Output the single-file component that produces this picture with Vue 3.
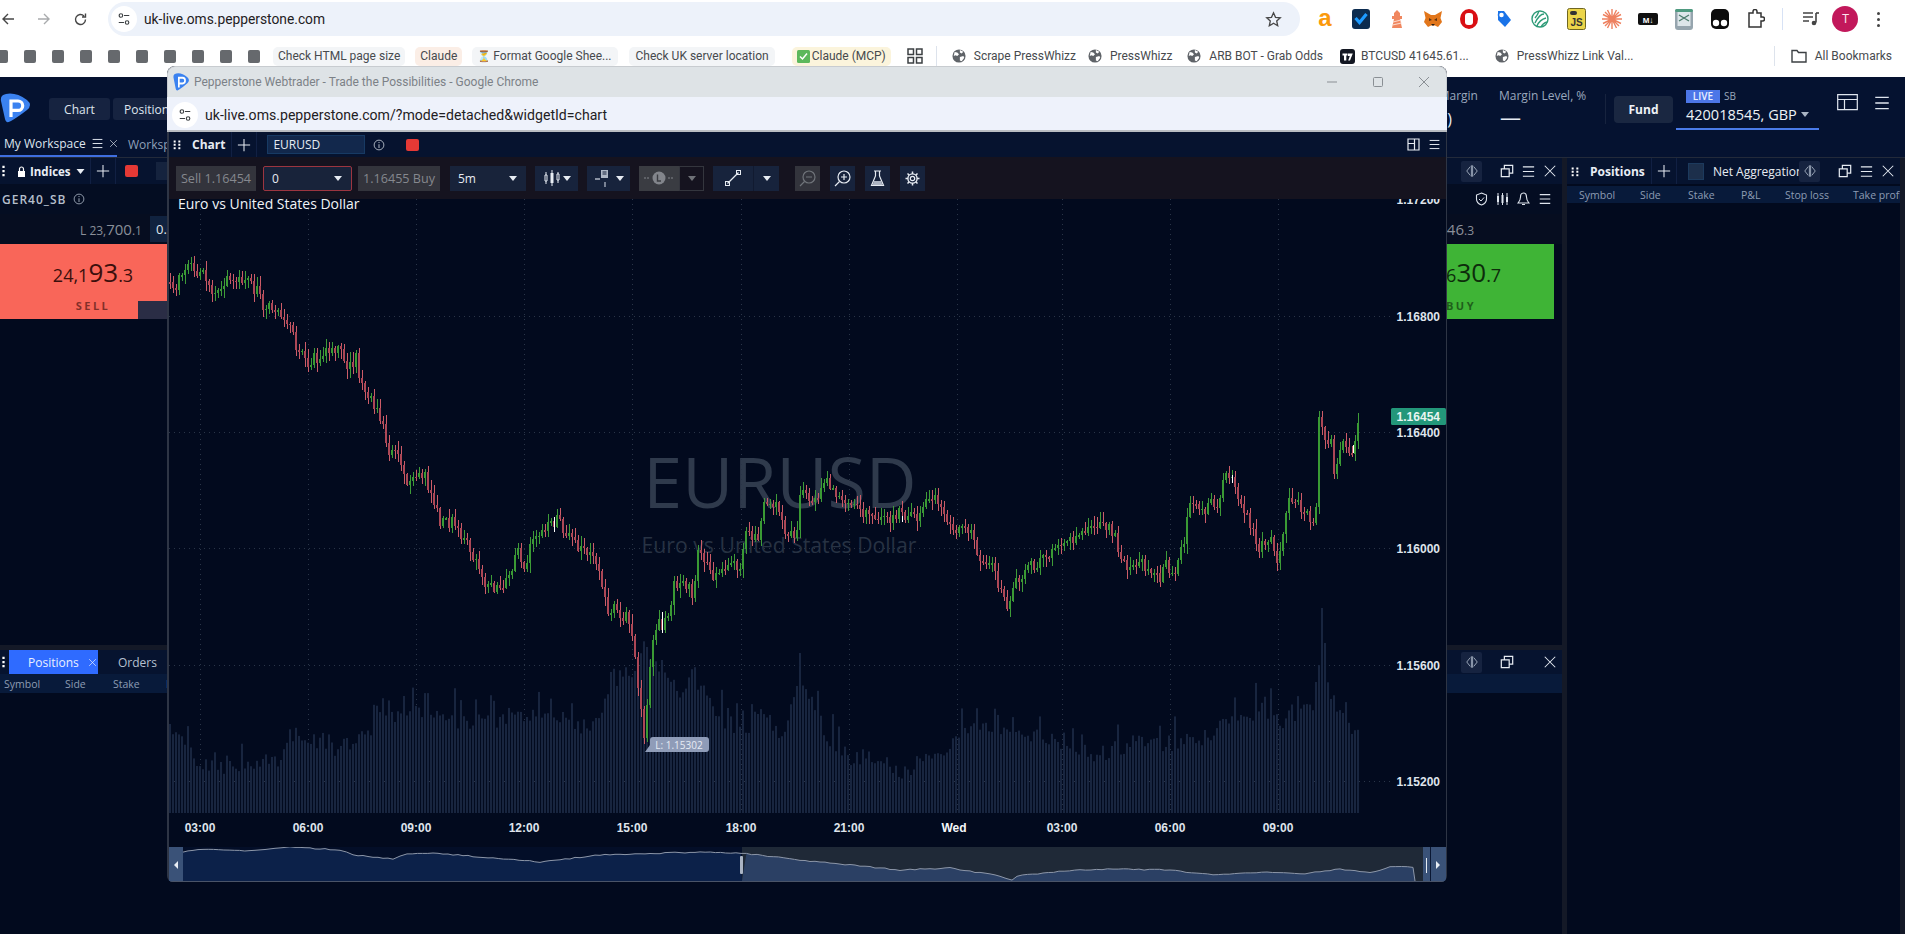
<script setup>
function rng(seed) {
  let s = seed
  return () => {
    s = (s * 1664525 + 1013904223) % 4294967296
    return s / 4294967296
  }
}
function interp(pts, x) {
  if (x <= pts[0][0]) return pts[0][1]
  for (let i = 1; i < pts.length; i++) {
    if (x <= pts[i][0]) {
      const [a, b] = pts[i - 1]
      const [c, d] = pts[i]
      return b + ((d - b) * (x - a)) / (c - a)
    }
  }
  return pts[pts.length - 1][1]
}

const pricePts = [[169,282],[175,293],[180,270],[187,267],[200,272],[213,293],[223,280],[237,283],[248,282],[260,297],[263,310],[273,308],[288,320],[293,343],[307,362],[323,353],[338,348],[347,370],[355,357],[360,383],[370,400],[383,427],[387,450],[400,462],[408,488],[422,470],[427,487],[440,523],[453,523],[460,540],[470,550],[480,578],[490,585],[500,590],[510,567],[517,547],[523,570],[533,537],[557,517],[570,543],[590,553],[597,573],[607,610],[617,610],[628,620],[633,653],[643,740],[650,653],[657,620],[663,627],[673,587],[687,583],[692,600],[697,547],[713,577],[733,567],[740,577],[743,537],[757,533],[763,497],[777,507],[783,527],[795,543],[798,497],[802,485],[810,510],[823,483],[833,487],[840,507],[853,502],[860,510],[877,517],[885,520],[897,513],[907,518],[920,517],[925,493],[940,507],[953,527],[965,523],[973,543],[980,563],[993,570],[1000,590],[1005,612],[1012,585],[1025,570],[1045,556],[1065,545],[1085,530],[1100,523],[1110,527],[1120,553],[1128,570],[1140,557],[1147,570],[1158,580],[1163,560],[1172,575],[1183,540],[1188,507],[1200,507],[1205,513],[1210,497],[1217,507],[1223,478],[1233,480],[1240,503],[1247,520],[1257,550],[1270,540],[1277,563],[1283,530],[1287,503],[1303,507],[1312,523],[1317,500],[1318,420],[1322,437],[1330,440],[1333,470],[1340,447],[1353,448],[1357,417]]

const volPts = [[169,726],[185,742],[200,762],[230,764],[280,754],[295,728],[310,736],[330,746],[370,730],[380,712],[420,708],[460,718],[500,716],[515,706],[540,716],[560,714],[590,726],[610,690],[640,656],[660,662],[680,690],[700,680],[720,716],[745,726],[760,704],[780,734],[800,672],[810,698],[830,738],[850,754],[877,752],[900,774],[920,756],[940,748],[953,736],[973,722],[1000,730],[1030,730],[1060,746],[1100,756],[1130,738],[1180,740],[1200,736],[1240,708],[1280,718],[1312,700],[1316,680],[1320,660],[1326,680],[1335,702],[1350,728],[1358,722]]

const r = rng(20240611)
let gw = '', gb = '', rw = '', rb = ''
let prev = interp(pricePts, 169)
for (let x = 169; x <= 1357; x += 3) {
  const close = interp(pricePts, x) + (r() - 0.5) * 13
  const top = Math.min(prev, close)
  const bot = Math.max(prev, close)
  const hi = top - 1 - r() * 9
  const lo = bot + 1 + r() * 9
  const up = close < prev
  const w = `M${x + 1} ${hi.toFixed(1)}V${lo.toFixed(1)}`
  const b = `M${x} ${top.toFixed(1)}h2V${Math.max(bot, top + 1.5).toFixed(1)}h-2z`
  if (up) { gw += w; gb += b } else { rw += w; rb += b }
  prev = close
}
const candlePaths = { gw, gb, rw, rb }
const whiteMarks = 'M554 517V532M662 612V633M902 516V522M1232 475V483M1353 445V453'

const vr = rng(77123)
const volSpikes = { 1318: 665, 1321: 608, 1324: 643, 799: 653, 646: 647, 610: 672 }
const volBars = []
for (let x = 169; x <= 1358; x += 3) {
  let y = interp(volPts, x) + vr() * 16 - 4
  if (vr() > 0.88) y -= 12 + vr() * 16
  if (volSpikes[x]) y = volSpikes[x]
  volBars.push({ x, y: +y.toFixed(1), h: +(813 - y).toFixed(1) })
}

const gridX = [200, 308, 416, 524, 632, 741, 849, 957, 1062, 1170, 1278]
const gridY = [316, 432, 548, 665, 781]
const prices = [
  { y: 203.5, t: '1.17200' }, { y: 320.5, t: '1.16800' }, { y: 436.5, t: '1.16400' },
  { y: 552.5, t: '1.16000' }, { y: 669.5, t: '1.15600' }, { y: 785.5, t: '1.15200' }
]
const times = [
  { x: 200, t: '03:00' }, { x: 308, t: '06:00' }, { x: 416, t: '09:00' }, { x: 524, t: '12:00' },
  { x: 632, t: '15:00' }, { x: 741, t: '18:00' }, { x: 849, t: '21:00' }, { x: 954, t: 'Wed', b: true },
  { x: 1062, t: '03:00' }, { x: 1170, t: '06:00' }, { x: 1278, t: '09:00' }
]

const navPts = [[183,852],[203,849],[250,851],[290,847],[340,850],[353,855],[393,859],[407,854],[433,853],[493,858],[540,862],[600,855],[700,852],[741,853],[800,860],[850,865],[900,870],[950,868],[1000,876],[1012,880],[1017,876],[1043,873],[1080,870],[1113,869],[1170,870],[1213,875],[1267,872],[1300,874],[1340,869],[1370,873],[1390,867],[1413,867],[1415,881]]
const nr = rng(991)
const navDense = []
for (let i = 0; i < navPts.length - 1; i++) {
  const [a, b] = navPts[i]
  const [c, d] = navPts[i + 1]
  const n = Math.max(1, Math.floor((c - a) / 5))
  for (let k = 0; k < n; k++) {
    const t = k / n
    navDense.push([+(a + (c - a) * t).toFixed(1), +(b + (d - b) * t + (nr() - 0.5) * 1.1).toFixed(1)])
  }
}
navDense.push([1415, 881])
const navLine = navDense.map(p => p.join(',')).join(' ')
const navLeft = navDense.filter(p => p[0] <= 742)
const navRight = navDense.filter(p => p[0] >= 742)
const navLeftArea = `183,881 ${navLeft.map(p => p.join(',')).join(' ')} 742,881`
const navRightArea = `742,881 ${navRight.map(p => p.join(',')).join(' ')}`

const leftMarks = Array.from({ length: 10 }, (_, i) => i)
const pills = [
  { t: 'Check HTML page size', c: 'p-plain' },
  { t: 'Claude', c: 'p-peach' },
  { t: 'Format Google Shee...', c: 'p-plain p-hour', hour: true },
  { t: 'Check UK server location', c: 'p-plain p-uk' },
  { t: 'Claude (MCP)', c: 'p-yellow p-mcp', check: true }
]
const columns = ['Symbol', 'Side', 'Stake', 'P&L', 'Stop loss', 'Take profit']
</script>

<template>
  <div class="page">
    <svg class="sprite" aria-hidden="true">
      <symbol id="i-ham" viewBox="0 0 16 16"><path d="M2 3h12M2 8h12M2 13h12" fill="none" stroke="currentColor" stroke-width="1.2"/></symbol>
      <symbol id="i-x" viewBox="0 0 16 16"><path d="M2 2l12 12M14 2L2 14" fill="none" stroke="currentColor" stroke-width="1.2"/></symbol>
      <symbol id="i-plus" viewBox="0 0 16 16"><path d="M8 1v14M1 8h14" fill="none" stroke="currentColor" stroke-width="1.2"/></symbol>
      <symbol id="i-restore" viewBox="0 0 16 16"><path d="M1.5 5.5h9v9h-9zM5 5.5V1.5h9.5v9h-4" fill="none" stroke="currentColor" stroke-width="1.4"/></symbol>
      <symbol id="i-split" viewBox="0 0 16 16"><path d="M6 3L2 8l4 5M10 3l4 5-4 5M7.3 1.5v13M8.7 1.5v13" fill="none" stroke="currentColor" stroke-width="1"/></symbol>
      <symbol id="i-info" viewBox="0 0 16 16"><circle cx="8" cy="8" r="6.5" fill="none" stroke="currentColor" stroke-width="1.1"/><path d="M8 7v5M8 4v1.4" stroke="currentColor" stroke-width="1.2"/></symbol>
      <symbol id="i-dots" viewBox="0 0 12 16"><path d="M1 2h3v3H1zM8 2h3v3H8zM1 7h3v3H1zM8 7h3v3H8zM1 12h3v3H1zM8 12h3v3H8z" fill="currentColor"/></symbol>
      <symbol id="i-tune" viewBox="0 0 16 16"><g fill="none" stroke="currentColor" stroke-width="1.3"><circle cx="4.5" cy="4" r="2"/><path d="M8 4h6M2 12h6"/><circle cx="11.5" cy="12" r="2"/></g></symbol>
      <symbol id="i-globe" viewBox="0 0 16 16"><circle cx="8" cy="8" r="7.5" fill="#5f6368"/><path d="M3 3.5l3 .5 2 2-2 2-2-1-2 1zM9 9l4-1 1 2-3 4-2-1zM9 1l4 2-2 2-2-1z" fill="#fff"/></symbol>
      <symbol id="i-logo" viewBox="0 0 32 30"><path d="M6 1Q16-1 27 7Q33 12 27 17Q18 24 11 28Q6 31 5 26L1 8Q0 2 6 1Z" fill="#3b82f0"/><path d="M11 24V8h7a4.6 4.6 0 0 1 0 9.4h-7" fill="none" stroke="#fff" stroke-width="3.2"/></symbol>
      <symbol id="i-caret" viewBox="0 0 8 5"><path d="M0 0h8L4 5z" fill="currentColor"/></symbol>
    </svg>

    <header class="browser">
      <div class="toolbar">
        <span class="nav-btn"><svg width="14" height="14" viewBox="0 0 14 14"><path d="M13 7H2M7 2L2 7l5 5" fill="none" stroke="#474747" stroke-width="1.4"/></svg></span>
        <span class="nav-btn"><svg width="14" height="14" viewBox="0 0 14 14"><path d="M1 7h11M7 2l5 5-5 5" fill="none" stroke="#a9abad" stroke-width="1.4"/></svg></span>
        <span class="nav-btn"><svg width="15" height="15" viewBox="0 0 15 15"><path d="M12.5 7.5a5 5 0 1 1-1.5-3.6M12.5 1.5V5H9" fill="none" stroke="#474747" stroke-width="1.4"/></svg></span>
        <div class="omnibox">
          <span class="tune"><svg width="14" height="14" class="ink"><use href="#i-tune"/></svg></span>
          <span class="url">uk-live.oms.pepperstone.com</span>
          <svg class="star" width="17" height="17" viewBox="0 0 17 17"><path d="M8.5 1.8l2 4.500 4.800.5-3.600 3.200 1 4.800-4.200-2.500-4.200 2.500 1-4.800L1.700 6.800l4.800-.5z" fill="none" stroke="#474747" stroke-width="1.3"/></svg>
        </div>
        <div class="exts">
          <span class="ext"><svg width="20" height="22" viewBox="0 0 20 22"><text x="10" y="18" text-anchor="middle" class="ext-a">a</text></svg></span>
          <span class="ext"><svg width="18" height="20" viewBox="0 0 18 20"><rect width="18" height="20" rx="3" fill="#0c2c50"/><path d="M3.5 9l4 4.500L14.500 5" fill="none" stroke="#1e9bff" stroke-width="3.2"/></svg></span>
          <span class="ext"><svg width="16" height="20" viewBox="0 0 16 20"><path d="M8 1l3 3v3h2v3h-2l2 9H3l2-9H3V7h2V4z" fill="#f0875f"/><path d="M4 13l8-2M3.5 16l9-2" stroke="#fbd9cc" stroke-width="1.2"/></svg></span>
          <span class="ext"><svg width="20" height="18" viewBox="0 0 20 18"><path d="M1 1l7 4h4l7-4-1.500 7L19 12l-4 5-3-1.500H8L5 17l-4-5 1.500-4z" fill="#e2761b"/><path d="M6 8l3 2-3 1zM14 8l-3 2 3 1z" fill="#5b3416"/><path d="M8 14h4l-2 2z" fill="#2b2018"/></svg></span>
          <span class="ext"><svg width="18" height="20" viewBox="0 0 18 20"><ellipse cx="9" cy="10" rx="9" ry="10" fill="#d90f14"/><rect x="5" y="4" width="8" height="12" rx="3" fill="#fff"/></svg></span>
          <span class="ext"><svg width="18" height="20" viewBox="0 0 18 20"><path d="M3 2h6l7 9-6 7-7-7z" fill="#1a73e8"/><circle cx="6.5" cy="6" r="3" fill="#fff" stroke="#1a73e8" stroke-width="1.5"/></svg></span>
          <span class="ext"><svg width="18" height="20" viewBox="0 0 18 20"><g fill="none" stroke="#2e9b78" stroke-width="1.4"><circle cx="9" cy="10" r="8"/><path d="M4 14c3-6 6-9 9-9M6 17c2-5 5-7 9-8M4 9c2-2 3-4 4-7M10 18c1-2 2-4 6-5"/></g></svg></span>
          <span class="ext"><svg width="19" height="22" viewBox="0 0 19 22"><rect x=".5" y=".5" width="18" height="21" rx="2" fill="#ecd54a" stroke="#6f6622"/><rect x="3" y="3" width="7" height="4" rx="2" fill="#333"/><text x="9.5" y="18" text-anchor="middle" class="ext-js">JS</text></svg></span>
          <span class="ext"><svg width="20" height="20" viewBox="0 0 20 20"><g stroke="#ee8160" stroke-width="1.4"><path d="M10 0v20M0 10h20M3 3l14 14M17 3L3 17M5.5 1l9 18M14.5 1l-9 18M1 5.5l18 9M19 5.5l-18 9"/></g></svg></span>
          <span class="ext"><svg width="20" height="12" viewBox="0 0 20 12"><rect width="20" height="12" rx="2" fill="#111"/><text x="10" y="9.5" text-anchor="middle" class="ext-md">M↓</text></svg></span>
          <span class="ext"><svg width="18" height="21" viewBox="0 0 18 21"><rect width="18" height="21" rx="3" fill="#96a5ae"/><rect x="2.5" y="3" width="13" height="14" fill="#dde6ea"/><path d="M4 6l10 6M14 6L4 12" stroke="#4c7c6d" stroke-width="1.4"/><rect y="0" width="18" height="3" rx="1.5" fill="#4f9a80"/></svg></span>
          <span class="ext"><svg width="18" height="20" viewBox="0 0 18 20"><rect width="18" height="20" rx="5" fill="#0c0c0c"/><circle cx="5" cy="14" r="3.2" fill="#fff"/><circle cx="13" cy="14" r="3.2" fill="#fff"/></svg></span>
          <span class="ext"><svg width="19" height="20" viewBox="0 0 19 20"><path d="M3 4h4V2.500a2 2 0 0 1 4 0V4h4v4h1.500a2 2 0 0 1 0 4H15v6H3z" fill="none" stroke="#333" stroke-width="1.5"/></svg></span>
          <span class="ext-sep"></span>
          <span class="ext"><svg width="18" height="16" viewBox="0 0 18 16"><path d="M1 2h10M1 6h10M1 10h6" stroke="#444" stroke-width="1.5"/><path d="M14 2v9.500" stroke="#444" stroke-width="1.6"/><circle cx="12" cy="12" r="2.3" fill="#444"/><path d="M14 2h3" stroke="#444" stroke-width="1.6"/></svg></span>
          <span class="avatar">T</span>
          <span class="menu-dots"><i></i><i></i><i></i></span>
        </div>
      </div>
      <div class="bookmarks">
        <div class="marks"><span v-for="m in leftMarks" :key="m" class="mark"></span></div>
        <span v-for="p in pills" :key="p.t" class="pill" :class="p.c">
          <span v-if="p.hour" class="hour">⏳</span>
          <svg v-if="p.check" width="13" height="13" viewBox="0 0 13 13"><rect width="13" height="13" rx="1.5" fill="#5cb85c"/><path d="M3 6.500l2.500 2.500L10 3.500" fill="none" stroke="#fff" stroke-width="1.5"/></svg>
          {{ p.t }}
        </span>
        <svg class="apps" width="16" height="16" viewBox="0 0 16 16"><path d="M1 1h5.500v5.500H1zM9.500 1H15v5.500H9.500zM1 9.500h5.500V15H1zM9.500 9.500H15V15H9.500z" fill="none" stroke="#3c4043" stroke-width="1.5"/></svg>
        <span class="bm-sep bm-sep-l"></span>
        <span class="bm bm-a"><svg width="14" height="14"><use href="#i-globe"/></svg>Scrape PressWhizz</span>
        <span class="bm bm-b"><svg width="14" height="14"><use href="#i-globe"/></svg>PressWhizz</span>
        <span class="bm"><svg width="14" height="14"><use href="#i-globe"/></svg>ARB BOT - Grab Odds</span>
        <span class="bm bm-tv"><svg width="15" height="15" viewBox="0 0 15 15"><rect width="15" height="15" rx="3" fill="#131722"/><path d="M2.5 4.500h5v2H6.300v5H4v-5H2.500zM8 4.500h4.800L10 11.500H8.200L9.800 7H8z" fill="#fff"/></svg>BTCUSD 41645.61...</span>
        <span class="bm bm-link"><svg width="14" height="14"><use href="#i-globe"/></svg>PressWhizz Link Val...</span>
        <span class="bm-sep bm-sep-r"></span>
        <span class="bm bm-all"><svg width="16" height="14" viewBox="0 0 16 14"><path d="M1 1.500h5l1.500 2H15V13H1z" fill="none" stroke="#3c4043" stroke-width="1.4"/></svg>All Bookmarks</span>
      </div>
    </header>

    <div class="app-head">
      <svg class="logo" width="32" height="30"><use href="#i-logo"/></svg>
      <nav class="main-nav">
        <span class="nav-chip">Chart</span>
        <span class="nav-chip">Positions</span>
      </nav>
      <div class="head-right">
        <div class="metric metric-free"><span class="m-label">Free Margin</span><span class="m-value">(0.00)</span></div>
        <div class="metric metric-level"><span class="m-label">Margin Level, %</span><span class="m-value m-dash">—</span></div>
        <span class="head-sep"></span>
        <span class="fund">Fund</span>
        <div class="account">
          <div class="acc-top"><span class="live">LIVE</span><span class="sb">SB</span></div>
          <div class="acc-num">420018545, GBP <svg width="8" height="5" class="muted"><use href="#i-caret"/></svg></div>
        </div>
        <svg class="layout" width="21" height="17" viewBox="0 0 21 17"><path d="M.7.700h19.600v15H.7zM.7 5.500h19.600M7.500 5.500v10.200" fill="none" stroke="#dfe5ee" stroke-width="1.2"/></svg>
        <svg class="head-ham ink-l" width="18" height="18"><use href="#i-ham"/></svg>
      </div>
    </div>

    <div class="tabs">
      <div class="tab tab-on">My Workspace <svg width="13" height="13"><use href="#i-ham"/></svg><svg width="9" height="9"><use href="#i-x"/></svg></div>
      <div class="tab tab-off">Workspace 2</div>
    </div>

    <main class="workspace">
      <div class="col-left">
        <section class="panel panel-top">
          <div class="p-head">
            <svg class="dots" width="5" height="12" viewBox="0 0 3 16"><path d="M0 1h3v3H0zM0 6.500h3v3H0zM0 12h3v3H0z" fill="#fff"/></svg>
            <svg class="lock" width="9" height="11" viewBox="0 0 9 11"><path d="M1 5h7v6H1z" fill="#fff"/><path d="M2.5 5V3a2 2 0 0 1 4 0v2" fill="none" stroke="#fff" stroke-width="1.2"/></svg>
            <strong class="p-title l-title">Indices</strong>
            <svg width="9" height="5" class="caret-w"><use href="#i-caret"/></svg>
            <span class="p-cell"><svg width="14" height="14"><use href="#i-plus"/></svg></span>
            <span class="red-sq"></span>
            <span class="sym-box"></span>
            <div class="p-tools">
              <span class="split"><svg width="14" height="14"><use href="#i-split"/></svg></span>
              <svg class="t-restore" width="14" height="14"><use href="#i-restore"/></svg>
              <svg width="15" height="15"><use href="#i-ham"/></svg>
              <svg width="14" height="14"><use href="#i-x"/></svg>
            </div>
          </div>
          <div class="sym-row">
            <span class="sym-name">GER40_SB</span>
            <svg width="12" height="12" class="muted"><use href="#i-info"/></svg>
            <div class="sym-tools">
              <svg width="13" height="14" viewBox="0 0 13 14"><path d="M6.5 1l5 2v4c0 3-2 5-5 6-3-1-5-3-5-6V3z" fill="none" stroke="currentColor" stroke-width="1.1"/><path d="M4 7l2 2 3-3.500" fill="none" stroke="currentColor"/></svg>
              <svg width="13" height="14" viewBox="0 0 13 14"><path d="M2 1v12M6.500 1v12M11 1v12" stroke="currentColor"/><path d="M1 4h2v6H1zM5.500 3h2v8h-2zM10 5h2v5h-2z" fill="currentColor"/></svg>
              <svg width="13" height="14" viewBox="0 0 13 14"><path d="M6.500 1c2.500 0 3 2 3 4 0 3 1 4 2.500 6H1c1.500-2 2.500-3 2.500-6 0-2 .5-4 3-4zM5 12.500h3" fill="none" stroke="currentColor" stroke-width="1.1"/></svg>
              <svg width="14" height="14"><use href="#i-ham"/></svg>
            </div>
          </div>
          <div class="hl-row">
            <span class="low"><small>L 23,</small>700<small>.1</small></span>
            <span class="qty">0.01</span>
            <span class="high"><small>H 24,</small>246<small>.3</small></span>
          </div>
          <div class="cards">
            <div class="card card-sell">
              <div class="quote"><span class="q-s">24,1</span><span class="q-b">93</span><span class="q-s">.3</span></div>
              <div class="c-label">SELL</div>
              <span class="lots"></span>
            </div>
            <div class="card card-buy">
              <div class="quote"><span class="q-s">24,6</span><span class="q-b">30</span><span class="q-s">.7</span></div>
              <div class="c-label">BUY</div>
            </div>
          </div>
        </section>

        <section class="panel panel-bottom">
          <div class="b-head">
            <svg class="dots" width="5" height="12" viewBox="0 0 3 16"><path d="M0 1h3v3H0zM0 6.500h3v3H0zM0 12h3v3H0z" fill="#fff"/></svg>
            <span class="b-tab b-on">Positions <svg width="9" height="9"><use href="#i-x"/></svg></span>
            <span class="b-tab">Orders</span>
            <div class="p-tools b-tools">
              <span class="split"><svg width="14" height="14"><use href="#i-split"/></svg></span>
              <svg class="t-restore" width="14" height="14"><use href="#i-restore"/></svg>
              <svg class="t-bx" width="14" height="14"><use href="#i-x"/></svg>
            </div>
          </div>
          <div class="th th-b"><span v-for="c in columns" :key="c">{{ c }}</span></div>
        </section>
      </div>

      <section class="panel panel-right">
        <div class="p-head">
          <svg class="grip" width="8" height="11" viewBox="0 0 12 16"><use href="#i-dots"/></svg>
          <strong class="p-title r-title">Positions</strong>
          <span class="p-cell r-plus"><svg width="14" height="14"><use href="#i-plus"/></svg></span>
          <span class="check"></span>
          <div class="net">Net Aggregation</div>
          <div class="p-tools r-tools">
            <span class="split"><svg width="14" height="14"><use href="#i-split"/></svg></span>
            <svg class="t-restore" width="14" height="14"><use href="#i-restore"/></svg>
            <svg width="15" height="15"><use href="#i-ham"/></svg>
            <svg width="14" height="14"><use href="#i-x"/></svg>
          </div>
        </div>
        <div class="th th-r"><span v-for="c in columns" :key="c">{{ c }}</span></div>
      </section>
    </main>

    <div class="popup">
      <div class="w-title">
        <svg width="17" height="18" viewBox="0 0 32 30" preserveAspectRatio="none"><use href="#i-logo"/></svg>
        <span class="w-name">Pepperstone Webtrader - Trade the Possibilities - Google Chrome</span>
        <div class="w-ctrl">
          <svg width="12" height="12" viewBox="0 0 12 12"><path d="M1 6h10" stroke="#8a8f94"/></svg>
          <svg width="12" height="12" viewBox="0 0 12 12"><rect x="1.5" y="1.5" width="9" height="9" rx="1" fill="none" stroke="#8a8f94"/></svg>
          <svg width="12" height="12" viewBox="0 0 12 12"><path d="M1 1l10 10M11 1L1 11" stroke="#8a8f94"/></svg>
        </div>
      </div>
      <div class="w-addr">
        <span class="tune"><svg width="14" height="14" class="ink"><use href="#i-tune"/></svg></span>
        <span class="w-url">uk-live.oms.pepperstone.com/?mode=detached&amp;widgetId=chart</span>
      </div>
      <div class="c-head">
        <svg class="grip" width="8" height="11" viewBox="0 0 12 16"><use href="#i-dots"/></svg>
        <strong class="c-title">Chart</strong>
        <span class="c-plus"><svg width="14" height="14"><use href="#i-plus"/></svg></span>
        <span class="c-sym">EURUSD</span>
        <svg class="c-info" width="12" height="12"><use href="#i-info"/></svg>
        <span class="c-red"></span>
        <div class="c-right">
          <svg width="13" height="13" viewBox="0 0 13 13"><path d="M1 1h11v11H1zM1 5.500h6.500M7.500 1v11" fill="none" stroke="#e6ebf2" stroke-width="1.2"/></svg>
          <svg width="13" height="13"><use href="#i-ham"/></svg>
        </div>
      </div>
      <div class="c-tools">
        <span class="ro ro-sell">Sell 1.16454</span>
        <span class="sel sel-red">0<svg width="8" height="5"><use href="#i-caret"/></svg></span>
        <span class="ro ro-buy">1.16455 Buy</span>
        <span class="sel sel-tf">5m<svg width="8" height="5"><use href="#i-caret"/></svg></span>
        <span class="tb tb-candle">
          <svg width="18" height="18" viewBox="0 0 18 18"><path d="M3 3v12M9 1v16M15 3v11" stroke="#e8edf4"/><path d="M2 6h2v6H2zM14 5h2v6h-2z" fill="#17233c" stroke="#e8edf4"/><path d="M7.500 4h3v10h-3z" fill="#e8edf4"/></svg>
          <svg width="8" height="5"><use href="#i-caret"/></svg>
        </span>
        <span class="tb tb-ind">
          <svg width="20" height="18" viewBox="0 0 20 18"><path d="M1 10h5M11 13v5" stroke="#aeb6c4" stroke-width="1.3"/><path d="M7 1h7v8H7z" fill="#aeb6c4"/><path d="M8.500 3h4M8.500 5h4" stroke="#17233c"/></svg>
          <svg width="8" height="5"><use href="#i-caret"/></svg>
        </span>
        <span class="tb-clock">
          <span class="clock-main"><svg width="32" height="14" viewBox="0 0 32 14"><path d="M1 7h6M25 7h6" stroke="#82858b" stroke-dasharray="2 1"/><circle cx="16" cy="7" r="6.5" fill="#82858b"/><path d="M14.500 3.500V10H18" fill="none" stroke="#3a3c42" stroke-width="1.4"/></svg></span>
          <span class="clock-caret"><svg width="8" height="5" class="dim"><use href="#i-caret"/></svg></span>
        </span>
        <span class="tb-line">
          <span class="line-main"><svg width="18" height="18" viewBox="0 0 18 18"><path d="M3.500 14.500L14.500 3.500" stroke="#e6ebf2" stroke-width="1.3"/><rect x="1.5" y="12.5" width="4" height="4" fill="none" stroke="#e6ebf2"/><rect x="12.5" y="1.5" width="4" height="4" fill="none" stroke="#e6ebf2"/></svg></span>
          <span class="line-caret"><svg width="8" height="5"><use href="#i-caret"/></svg></span>
        </span>
        <span class="ic ic-off"><svg width="17" height="17" viewBox="0 0 17 17"><circle cx="10" cy="7" r="6" fill="none" stroke="#70747a" stroke-width="1.2"/><path d="M7 7h6M5.500 11.500L1 16" stroke="#70747a" stroke-width="1.2"/></svg></span>
        <span class="ic"><svg width="17" height="17" viewBox="0 0 17 17"><circle cx="10" cy="7" r="6" fill="none" stroke="#e6ebf2" stroke-width="1.2"/><path d="M7 7h6M10 4v6M5.500 11.500L1 16" stroke="#e6ebf2" stroke-width="1.2"/></svg></span>
        <span class="ic"><svg width="15" height="17" viewBox="0 0 15 17"><path d="M4 1h7M5.500 1v5L1.500 15.500h12L9.500 6V1" fill="none" stroke="#e6ebf2" stroke-width="1.2"/><path d="M4 11h7l1.500 4h-10z" fill="#aeb6c4"/></svg></span>
        <span class="ic"><svg width="15" height="15" viewBox="0 0 15 15"><circle cx="7.5" cy="7.5" r="2.2" fill="none" stroke="#e6ebf2" stroke-width="1.2"/><circle cx="7.5" cy="7.5" r="4.6" fill="none" stroke="#e6ebf2" stroke-width="1.4"/><path d="M7.500.5V3M7.500 12v2.500M.5 7.500H3M12 7.500h2.500M2.500 2.500l1.800 1.800M10.700 10.700l1.800 1.800M12.500 2.500l-1.800 1.800M4.300 10.700l-1.800 1.800" stroke="#e6ebf2" stroke-width="1.5"/></svg></span>
      </div>
      <svg class="chart" width="1277" height="648" viewBox="169 199 1277 648">
        <text x="780" y="508" text-anchor="middle" class="wm-big">EURUSD</text>
        <text x="779" y="553" text-anchor="middle" class="wm-small">Euro vs United States Dollar</text>
        <line v-for="x in gridX" :key="'v' + x" :x1="x + 0.5" :x2="x + 0.5" y1="199" y2="813" class="grid"/>
        <line v-for="y in gridY" :key="'h' + y" x1="169" x2="1390" :y1="y + 0.5" :y2="y + 0.5" class="grid"/>
        <rect v-for="b in volBars" :key="b.x" :x="b.x" :y="b.y" width="2" :height="b.h" class="vol"/>
        <g class="candles">
          <path :d="candlePaths.gw" class="w-g"/>
          <path :d="candlePaths.rw" class="w-r"/>
          <path :d="candlePaths.gb" class="b-g"/>
          <path :d="candlePaths.rb" class="b-r"/>
          <path :d="whiteMarks" class="w-w"/>
        </g>
        <text x="178" y="209" class="c-sub">Euro vs United States Dollar</text>
        <text v-for="p in prices" :key="p.t" x="1440" :y="p.y" text-anchor="end" class="axis">{{ p.t }}</text>
        <rect x="1391" y="408" width="55" height="17" rx="1.5" class="tag"/>
        <text x="1440" y="421" text-anchor="end" class="tag-t">1.16454</text>
        <path d="M645 752l5-7v-5a3 3 0 0 1 3-3h53a3 3 0 0 1 3 3v9a3 3 0 0 1-3 3z" class="tip"/>
        <text x="679" y="748.5" text-anchor="middle" class="tip-t">L: 1.15302</text>
        <text v-for="t in times" :key="t.t + t.x" :x="t.x" y="832" text-anchor="middle" class="axis" :class="{ wed: t.b }">{{ t.t }}</text>
      </svg>
      <svg class="navigator" width="1277" height="35" viewBox="169 847 1277 35">
        <rect x="169" y="847" width="1277" height="35" class="n-bg"/>
        <rect x="183" y="847" width="559" height="35" class="n-sel"/>
        <polygon :points="navLeftArea" class="n-fill-l"/>
        <polygon :points="navRightArea" class="n-fill-r"/>
        <polyline :points="navLine" class="n-line"/>
        <rect x="169" y="847" width="14" height="35" class="n-h"/>
        <path d="M178 861v8l-4-4z" class="n-arrow"/>
        <rect x="740" y="856" width="3" height="18" rx="1" class="n-grab"/>
        <rect x="1423" y="847" width="23" height="35" class="n-h"/>
        <path d="M1430.500 847v35" class="n-div"/>
        <path d="M1426.500 858v15" class="n-white"/>
        <path d="M1436 861v8l4-4z" class="n-arrow"/>
        <path d="M169 881.500h1277" class="n-base"/>
      </svg>
    </div>
  </div>
</template>

<style>
html, body { margin: 0; background: #020a1e; }
</style>

<style scoped>
.page {
  position: relative;
  width: 1905px;
  height: 934px;
  overflow: hidden;
  display: flex;
  flex-direction: column;
  background: #020a1e;
  color: #e6ebf2;
  font-family: "Open Sans", "Noto Sans", sans-serif;
  font-size: 12px;
}
.sprite { position: absolute; width: 0; height: 0; }
svg { display: block; flex: none; }
.ink { color: #3c4043; }
.ink-l { color: #dfe5ee; }
.muted { color: #a9b4c4; }

/* browser chrome */
.browser { background: #fff; color: #3c4043; font-family: Roboto, "Noto Sans", sans-serif; height: 77px; flex: none; }
.toolbar { height: 38px; display: flex; align-items: center; margin-left: -10px; }
.nav-btn { width: 36px; display: flex; justify-content: center; }
.omnibox {
  margin-left: 10px;
  width: 1192px;
  height: 34px;
  border-radius: 17px;
  background: #edf2fa;
  display: flex;
  align-items: center;
  padding-left: 3px;
  box-sizing: border-box;
}
.tune {
  width: 26px;
  height: 26px;
  border-radius: 50%;
  background: #fff;
  display: flex;
  align-items: center;
  justify-content: center;
  flex: none;
}
.url { margin-left: 7px; font-size: 13.8px; color: #1f2023; }
.star { margin-left: auto; margin-right: 18px; }
.exts { display: flex; align-items: center; margin-left: 7px; }
.ext { width: 35.9px; display: flex; justify-content: center; align-items: center; }
.ext-a { font: bold 24px "Liberation Sans", sans-serif; fill: #fb9a0c; }
.ext-js { font: bold 10px "Liberation Sans", sans-serif; fill: #333; }
.ext-md { font: bold 8px "Liberation Sans", "DejaVu Sans", sans-serif; fill: #fff; }
.ext-sep { width: 1px; height: 22px; background: #d7e2f5; margin: 0 10px 0 8px; }
.avatar {
  width: 26px;
  height: 26px;
  margin-left: 4px;
  border-radius: 50%;
  background: #c2185b;
  color: #fbe4ee;
  font-size: 12px;
  display: flex;
  align-items: center;
  justify-content: center;
}
.menu-dots { margin-left: 19px; display: flex; flex-direction: column; gap: 3px; }
.menu-dots i { display: block; width: 3px; height: 3px; border-radius: 50%; background: #444; }

.bookmarks { height: 36px; display: flex; align-items: center; font-size: 12px; color: #474a4e; white-space: nowrap; }
.marks { display: flex; gap: 16px; margin-left: -4px; margin-right: 13px; }
.mark { width: 12px; height: 13px; border-radius: 2px; background: #66696d; }
.pill { height: 19px; display: flex; align-items: center; gap: 2px; padding: 0 5px; border-radius: 5px; margin-right: 10px; }
.p-plain { background: #f3f5f7; }
.p-peach { background: #fbeee6; }
.p-yellow { background: #fbf4dc; }
.p-hour { padding-right: 7px; margin-right: 11px; }
.p-uk { padding: 0 6px; margin-right: 17px; }
.p-mcp { padding: 0 5px; gap: 2px; }
.hour { font-size: 11px; }
.apps { margin-left: 6px; }
.bm-sep { width: 1px; height: 20px; background: #dde3ec; margin: 0 13px; }
.bm-sep-l { margin-right: 15px; }
.bm { display: flex; align-items: center; gap: 8px; margin-right: 17px; }
.bm-a { margin-right: 12px; }
.bm-b { margin-right: 15px; }
.bm-tv { gap: 6px; margin-right: 26px; }
.bm-link { margin-right: 0; }
.bm-sep-r { margin-left: auto; margin-right: 16px; }
.bm-all { margin-right: 13px; }

/* app head */
.app-head { height: 53px; flex: none; background: #051230; display: flex; align-items: flex-start; position: relative; }
.logo { margin-top: 16px; }
.main-nav { display: flex; gap: 3px; margin: 21px 0 0 17px; }
.nav-chip {
  height: 22px;
  padding: 0 11px;
  display: flex;
  align-items: center;
  background: #162340;
  border-radius: 3px;
  font-size: 12px;
  color: #dfe5ee;
}
.nav-chip:first-child { width: 61px; box-sizing: border-box; justify-content: center; }
.head-right { margin-left: auto; display: flex; align-items: flex-start; padding-right: 14px; }
.metric { display: flex; flex-direction: column; color: #9aa8bd; }
.metric-free { margin-right: 20px; width: 68px; }
.metric-level { width: 88px; margin-right: 18px; }
.m-label { margin-top: 10px; white-space: nowrap; font-size: 12px; }
.m-value { color: #e6ebf2; font-size: 16px; line-height: 22px; margin-top: 4px; white-space: nowrap; }
.m-dash { font-size: 21px; margin-left: 1px; margin-top: 2px; }
.head-sep { width: 1px; height: 30px; margin: 17px 8px 0 0; background: #17233e; }
.fund {
  width: 59px;
  height: 27px;
  margin-top: 19px;
  background: #1a2741;
  border-radius: 4px;
  font-weight: 700;
  color: #eef2f7;
  display: flex;
  align-items: center;
  justify-content: center;
}
.account { margin-left: 3px; width: 143px; height: 53px; padding: 12px 0 0 10px; box-sizing: border-box; border-bottom: 2px solid #4a7bea; }
.acc-top { display: flex; align-items: center; gap: 4px; }
.live { width: 34px; height: 13px; background: #4c76e8; color: #eaf0ff; font-size: 10px; font-weight: 600; display: flex; align-items: center; justify-content: center; }
.sb { font-size: 10px; color: #9aa8bd; }
.acc-num { display: flex; align-items: center; gap: 4px; font-size: 14.5px; margin-top: 2px; color: #eef2f7; white-space: nowrap; }
.layout { margin: 17px 0 0 18px; }
.head-ham { margin: 17px 0 0 15px; }

.tabs { height: 27px; flex: none; background: #051230; display: flex; border-bottom: 1px solid #232a3a; box-sizing: content-box; }
.tab { display: flex; align-items: center; white-space: nowrap; font-size: 12px; padding-top: 1px; }
.tab-on { width: 117px; padding-left: 4px; gap: 5px; box-sizing: border-box; color: #dfe5ee; border-bottom: 2px solid #3f6fe0; }
.tab-off { margin-left: 11px; color: #8fa0b8; }

/* workspace */
.workspace { flex: 1; min-height: 0; display: grid; grid-template-columns: 1562px 333px; column-gap: 5px; background: #141927; }
.col-left { display: grid; grid-template-rows: 487px 1fr; row-gap: 5px; min-height: 0; }
.panel { background: #020a1e; min-width: 0; overflow: hidden; }
.panel-right { height: 776px; }
.p-head { height: 26px; display: flex; align-items: center; background: #06132f; position: relative; }
.dots { margin-left: 1px; }
.lock { margin-left: 11px; }
.p-title { font-size: 12px; color: #e9eef5; margin-left: 4px; }
.l-title { font-size: 11.5px; }
.caret-w { margin-left: 5px; color: #e9eef5; }
.p-cell { margin-left: 5px; width: 24px; height: 26px; display: flex; align-items: center; justify-content: center; border-left: 1px solid #112043; border-right: 1px solid #112043; }
.red-sq { width: 13px; height: 12px; border-radius: 2px; background: #e53935; margin-left: 9px; }
.sym-box { width: 97px; height: 18px; background: #15233e; margin-left: 18px; }
.p-tools { margin-left: auto; display: flex; align-items: center; gap: 7px; padding-right: 5px; color: #e6ebf2; }
.split { width: 21px; height: 21px; background: #162340; border-radius: 2px; display: flex; align-items: center; justify-content: center; color: #aab6c6; margin-right: 11px; }
.t-bx { margin-left: 22px; }
.sym-row { height: 30px; display: flex; align-items: center; padding: 0 10px 0 2px; gap: 7px; background: #040d22; }
.sym-name { font-weight: 600; font-size: 12px; color: #b5bfcc; letter-spacing: 1px; }
.sym-tools { margin-left: auto; display: flex; gap: 8px; color: #dfe5ee; }
.hl-row { height: 30px; display: flex; align-items: center; background: #060d20; color: #8a8f99; font-size: 15px; white-space: nowrap; }
.hl-row small { font-size: 12px; }
.low { margin-left: 80px; width: 60px; }
.qty { margin-left: 10px; width: 60px; height: 26px; box-sizing: border-box; padding-left: 6px; background: #10223f; color: #dfe5ee; display: flex; align-items: center; font-size: 13px; }
.high { margin-left: auto; margin-right: 88px; }
.cards { display: flex; justify-content: space-between; padding-right: 8px; height: 75px; }
.card { width: 186px; display: flex; flex-direction: column; align-items: center; position: relative; }
.card-sell { background: #f96659; color: #3b0f0c; }
.card-buy { background: #3fb436; color: #0d2c0b; }
.quote { display: flex; align-items: baseline; margin-top: 10px; line-height: 36px; }
.q-s { font-size: 18px; }
.q-b { font-size: 26px; }
.c-label { font-size: 11px; font-weight: 700; letter-spacing: 2.5px; opacity: .62; margin-top: 5px; }
.lots { position: absolute; left: 138px; right: 0; bottom: 0; height: 18px; background: #2a2d45; }
.b-head { height: 24px; display: flex; align-items: center; background: #06132f; }
.b-head .dots { margin-right: 3px; }
.b-tab { height: 24px; display: flex; align-items: center; gap: 9px; font-size: 12px; color: #b5c0d0; margin-left: 20px; }
.b-on { width: 89px; box-sizing: border-box; margin-left: 0; padding-left: 19px; background: #2f6bff; color: #eaf0ff; }
.th { height: 19px; display: grid; grid-template-columns: 61px 48px 53px 44px 68px 1fr; align-items: center; background: #081a3a; color: #8d9cb3; font-size: 10.5px; white-space: nowrap; overflow: hidden; }
.th-b { padding-left: 4px; }
.th-r { padding-left: 12px; margin-top: 2px; height: 17px; }
.grip { color: #fff; margin-left: 4px; }
.r-title { margin-left: 11px; }
.r-plus { margin-left: 6px; width: 25px; }
.check { width: 16px; height: 17px; background: #1c2f4b; border: 1px solid #1c3a5d; box-sizing: border-box; margin-left: 11px; }
.net { margin-left: 9px; width: 88px; overflow: hidden; white-space: nowrap; font-size: 12px; }
.r-tools { padding-right: 5px; }

/* popup window */
.popup {
  position: absolute;
  left: 167px;
  top: 66px;
  width: 1280px;
  height: 816px;
  display: flex;
  flex-direction: column;
  border-radius: 8px 8px 6px 6px;
  overflow: hidden;
  box-sizing: border-box;
  background: #2e3545;
}
.w-title {
  height: 31px;
  flex: none;
  background: #dee3e6;
  display: flex;
  align-items: center;
  padding-left: 5px;
  border: 1px solid #c8ccd0;
  border-bottom: 0;
  border-radius: 8px 8px 0 0;
  box-sizing: border-box;
  font-family: Roboto, "Noto Sans", sans-serif;
}
.w-name { margin-left: 4px; font-size: 12px; color: #7c8187; white-space: nowrap; }
.w-ctrl { margin-left: auto; display: flex; gap: 34px; padding-right: 16px; }
.w-addr {
  height: 31px;
  padding: 2px 0 0 5px;
  flex: none;
  background: #eef2fb;
  display: flex;
  align-items: center;
  border-bottom: 2px solid #b9bdc2;
  box-sizing: content-box;
  font-family: Roboto, "Noto Sans", sans-serif;
}
.w-url { margin-left: 7px; font-size: 14.1px; color: #1f2023; white-space: nowrap; }
.popup > .c-head, .popup > .c-tools { margin: 0 1px 0 2px; }
.c-head { height: 25px; flex: none; background: #06132f; display: flex; align-items: center; }
.c-title { font-size: 12px; margin-left: 11px; }
.c-plus { margin-left: 6px; width: 24px; height: 25px; display: flex; align-items: center; justify-content: center; border-left: 1px solid #112043; border-right: 1px solid #112043; }
.c-sym { width: 98px; height: 19px; margin-left: 10px; box-sizing: border-box; background: #12284c; border: 1px solid #173a63; padding-left: 5px; display: flex; align-items: center; font-size: 12px; }
.c-info { margin-left: 8px; color: #c6ced8; }
.c-red { width: 13px; height: 12px; border-radius: 2px; background: #e53935; margin-left: 21px; }
.c-right { margin-left: auto; display: flex; gap: 8px; padding-right: 5px; align-items: center; }
.c-tools { height: 42px; flex: none; background: #15131f; display: flex; align-items: center; padding-left: 7px; box-sizing: border-box; font-size: 12px; }
.ro { height: 25px; display: flex; align-items: center; justify-content: center; background: #33343c; color: #85888e; white-space: nowrap; font-size: 12.6px; }
.ro-sell { width: 80px; }
.ro-buy { width: 82px; margin-left: 6px; }
.sel { height: 25px; box-sizing: border-box; display: flex; align-items: center; justify-content: space-between; padding: 0 9px 0 8px; color: #e6ebf2; background: #18233a; }
.sel-red { width: 89px; margin-left: 7px; border: 1px solid #9c3540; border-radius: 2px; }
.sel-tf { width: 76px; margin-left: 10px; }
.tb { height: 25px; width: 43px; display: flex; align-items: center; justify-content: center; gap: 2px; background: #17233c; margin-left: 9px; box-sizing: border-box; color: #e6ebf2; }
.tb-clock { display: flex; height: 25px; margin-left: 9px; }
.clock-main { width: 40px; background: #3a3c42; display: flex; align-items: center; justify-content: center; }
.clock-caret { width: 25px; border: 1px solid #34363e; box-sizing: border-box; display: flex; align-items: center; justify-content: center; }
.dim { color: #6e7177; }
.tb-line { display: flex; height: 25px; margin-left: 9px; background: #17233c; color: #e6ebf2; }
.line-main { width: 40px; display: flex; align-items: center; justify-content: center; border-right: 1px solid #111a30; }
.line-caret { width: 25px; display: flex; align-items: center; justify-content: center; }
.ic { width: 25px; height: 25px; background: #17233c; display: flex; align-items: center; justify-content: center; margin-left: 10px; }
.ic-off { background: #33343c; margin-left: 16px; }

.chart { margin-left: 2px; flex: none; background: #020a1e; }
.grid { stroke: #2a3548; stroke-width: 1; stroke-dasharray: 1 4; }
.vol { fill: #18253f; }
.candles path { shape-rendering: crispEdges; }
.w-g { stroke: #3e9c38; fill: none; }
.w-r { stroke: #cc5c68; fill: none; }
.b-g { fill: #3a9a34; }
.b-r { fill: #ac4756; }
.w-w { stroke: #fff; fill: none; }
.wm-big { font: 70px "Open Sans", sans-serif; fill: #2f3a4c; }
.wm-small { font: 21.2px "Open Sans", sans-serif; fill: #273243; }
.c-sub { font: 14px "Open Sans", sans-serif; fill: #f0f3f7; }
.axis { font: bold 12px "Liberation Sans", sans-serif; fill: #dfe4ec; }
.wed { fill: #f5f7fa; }
.tag { fill: #23977a; }
.tag-t { font: bold 12px "Liberation Sans", sans-serif; fill: #e9f5f1; }
.tip { fill: #8f9cb8; }
.tip-t { font: 10px "Open Sans", sans-serif; fill: #e6ebf4; }
.navigator { margin-left: 2px; flex: none; }
.n-bg { fill: #1f2937; }
.n-sel { fill: #030e28; }
.n-fill-l { fill: #0c2149; }
.n-fill-r { fill: #2b4064; }
.n-line { fill: none; stroke: #8d97a9; stroke-width: 1; }
.n-h { fill: #3a5278; }
.n-arrow { fill: #e8edf4; }
.n-grab { fill: #aab4c4; }
.n-div { stroke: #0a1733; stroke-width: 1; fill: none; }
.n-white { stroke: #e6ebf2; stroke-width: 1; fill: none; }
.n-base { stroke: #4a5468; stroke-width: 1; fill: none; }
</style>
